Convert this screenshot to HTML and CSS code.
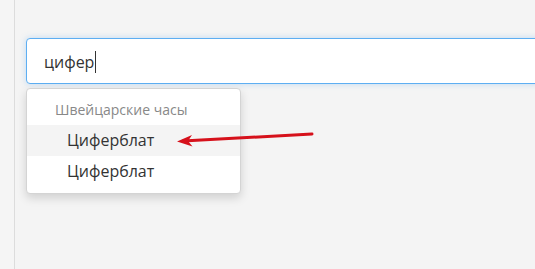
FILE: index.html
```html
<!DOCTYPE html>
<html lang="ru">
<head>
    <meta charset="UTF-8">
    <meta name="viewport" content="width=device-width, initial-scale=1.0">
    <title>Поиск</title>
    <link rel="stylesheet" href="styles.css">
</head>
<body>
    <div class="page">
        <div class="sidebar"></div>
        <div class="main">
            <div class="search">
                <span class="query">цифер</span><span class="caret"></span>
            </div>
            <div class="dropdown">
                <div class="group">Швейцарские часы</div>
                <div class="item active">Циферблат</div>
                <div class="item">Циферблат</div>
            </div>
        </div>
    </div>
    <svg class="arrow" width="150" height="20" viewBox="0 0 150 20">
        <line x1="137" y1="3" x2="8" y2="10" stroke="#d6111b" stroke-width="3" stroke-linecap="round"/>
        <path d="M2 10.5 L17 4 L13 10 L17.5 15.5 Z" fill="#d6111b"/>
    </svg>
</body>
</html>
```

FILE: styles.css
```css
html, body {
    margin: 0;
    height: 100%;
}
body {
    background-color: #f4f4f4;
    font-family: "Open Sans", "Noto Sans", sans-serif;
    color: #333;
    overflow: hidden;
    position: relative;
}
.page {
    display: flex;
    height: 100%;
}
.sidebar {
    width: 14px;
    flex-shrink: 0;
    border-right: 1px solid #dcdcdc;
    background-color: #f5f5f5;
}
.main {
    flex: 1;
    min-width: 0;
    padding: 38px 0 0 11px;
}
.search {
    width: calc(100% + 8px);
    height: 46px;
    box-sizing: border-box;
    border: 1px solid #5daef2;
    border-radius: 4px;
    background-color: #fff;
    box-shadow: 0 0 6px rgba(93, 170, 240, 0.35);
    display: flex;
    align-items: center;
    padding-left: 17px;
    padding-top: 1px;
    font-size: 16px;
}
.caret {
    display: inline-block;
    width: 1px;
    height: 22px;
    background-color: #333;
    margin-left: 1px;
}
.dropdown {
    width: 215px;
    margin-top: 4px;
    box-sizing: border-box;
    border: 1px solid #d4d4d4;
    border-radius: 4px;
    background-color: #fff;
    box-shadow: 0 4px 10px rgba(0, 0, 0, 0.15);
    padding: 4px 0 6px;
}
.group {
    padding: 8px 0 6px 28px;
    font-size: 14px;
    color: #888;
    line-height: 18px;
}
.item {
    padding: 0 0 0 40px;
    height: 31px;
    line-height: 31px;
    font-size: 16px;
    color: #333;
}
.item.active {
    background-color: #f4f4f4;
}
.arrow {
    position: absolute;
    left: 175px;
    top: 131px;
}
```
